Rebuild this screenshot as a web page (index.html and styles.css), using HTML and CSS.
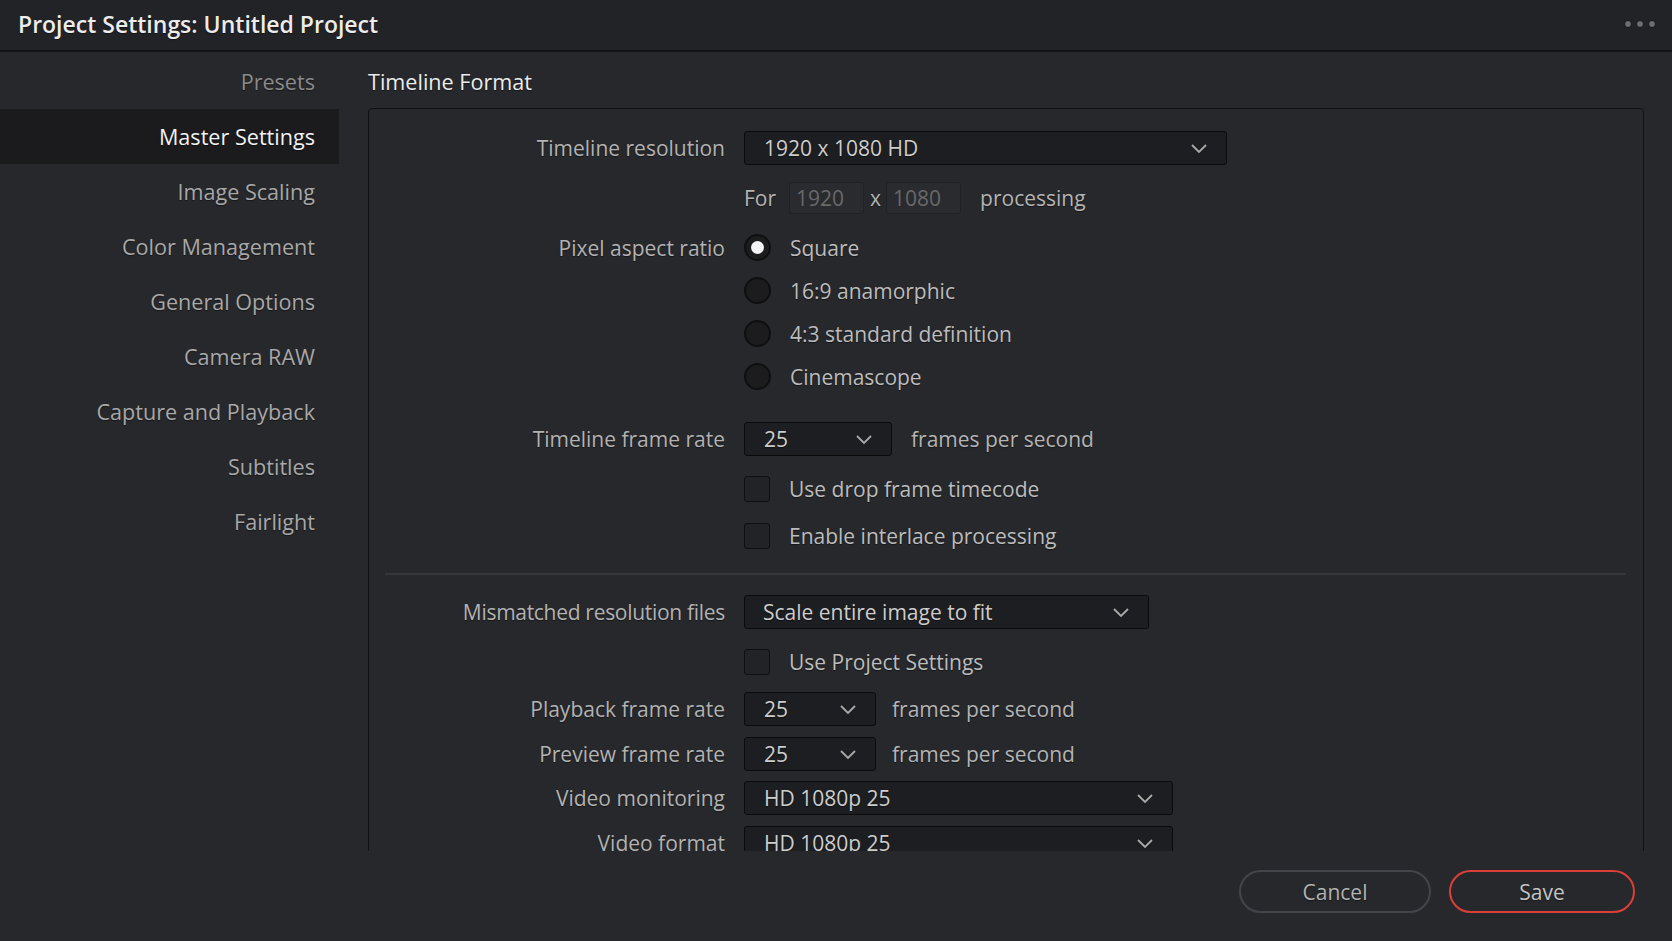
FILE: index.html
```html
<!DOCTYPE html>
<html lang="en">
<head>
  <meta charset="UTF-8">
  <title>Project Settings: Untitled Project</title>
  <link rel="stylesheet" href="styles.css">
</head>
<body>
<div class="titlebar">
  <h1 class="title">Project Settings: Untitled Project</h1>
  <div class="dots"><i></i><i></i><i></i></div>
</div>

<div class="main">
  <ul class="sidebar">
    <li class="presets">Presets</li>
    <li class="active">Master Settings</li>
    <li>Image Scaling</li>
    <li>Color Management</li>
    <li>General Options</li>
    <li>Camera RAW</li>
    <li>Capture and Playback</li>
    <li>Subtitles</li>
    <li>Fairlight</li>
  </ul>

  <div class="content">
    <h2 class="section-title">Timeline Format</h2>

    <div class="scroll">
      <div class="panel">
        <div class="row first">
          <span class="label">Timeline resolution</span>
          <div class="select w-res"><span>1920 x 1080 HD</span>
            <svg width="16" height="9" viewBox="0 0 16 9"><path d="M1 1l7 7 7-7" fill="none" stroke="#a9a9a9" stroke-width="1.8"/></svg>
          </div>
        </div>

        <div class="row">
          <span class="label"></span>
          <span class="text">For</span>
          <span class="field">1920</span>
          <span class="text times">x</span>
          <span class="field">1080</span>
          <span class="text after">processing</span>
        </div>

        <div class="row radio first-radio">
          <span class="label">Pixel aspect ratio</span>
          <span class="dot checked"></span><span class="opt">Square</span>
        </div>
        <div class="row radio">
          <span class="label"></span>
          <span class="dot"></span><span class="opt">16:9 anamorphic</span>
        </div>
        <div class="row radio">
          <span class="label"></span>
          <span class="dot"></span><span class="opt">4:3 standard definition</span>
        </div>
        <div class="row radio">
          <span class="label"></span>
          <span class="dot"></span><span class="opt">Cinemascope</span>
        </div>

        <div class="row rate">
          <span class="label">Timeline frame rate</span>
          <div class="select w-fps"><span>25</span>
            <svg width="16" height="9" viewBox="0 0 16 9"><path d="M1 1l7 7 7-7" fill="none" stroke="#a9a9a9" stroke-width="1.8"/></svg>
          </div>
          <span class="text after">frames per second</span>
        </div>

        <div class="row check first-check">
          <span class="label"></span>
          <span class="box"></span><span class="opt">Use drop frame timecode</span>
        </div>
        <div class="row check">
          <span class="label"></span>
          <span class="box"></span><span class="opt">Enable interlace processing</span>
        </div>

        <hr class="divider">

        <div class="row mismatch">
          <span class="label narrow">Mismatched resolution files</span>
          <div class="select w-fit"><span>Scale entire image to fit</span>
            <svg width="16" height="9" viewBox="0 0 16 9"><path d="M1 1l7 7 7-7" fill="none" stroke="#a9a9a9" stroke-width="1.8"/></svg>
          </div>
        </div>

        <div class="row project">
          <span class="label"></span>
          <span class="box"></span><span class="opt">Use Project Settings</span>
        </div>

        <div class="row playback">
          <span class="label">Playback frame rate</span>
          <div class="select w-small"><span>25</span>
            <svg width="16" height="9" viewBox="0 0 16 9"><path d="M1 1l7 7 7-7" fill="none" stroke="#a9a9a9" stroke-width="1.8"/></svg>
          </div>
          <span class="text after-small">frames per second</span>
        </div>

        <div class="row preview">
          <span class="label">Preview frame rate</span>
          <div class="select w-small"><span>25</span>
            <svg width="16" height="9" viewBox="0 0 16 9"><path d="M1 1l7 7 7-7" fill="none" stroke="#a9a9a9" stroke-width="1.8"/></svg>
          </div>
          <span class="text after-small">frames per second</span>
        </div>

        <div class="row monitor">
          <span class="label">Video monitoring</span>
          <div class="select w-video"><span>HD 1080p 25</span>
            <svg width="16" height="9" viewBox="0 0 16 9"><path d="M1 1l7 7 7-7" fill="none" stroke="#a9a9a9" stroke-width="1.8"/></svg>
          </div>
        </div>

        <div class="row format">
          <span class="label">Video format</span>
          <div class="select w-video"><span>HD 1080p 25</span>
            <svg width="16" height="9" viewBox="0 0 16 9"><path d="M1 1l7 7 7-7" fill="none" stroke="#a9a9a9" stroke-width="1.8"/></svg>
          </div>
        </div>
      </div>
    </div>

    <div class="footer">
      <button class="btn cancel">Cancel</button>
      <button class="btn save">Save</button>
    </div>
  </div>
</div>
</body>
</html>
```

FILE: styles.css
```css
* {
  padding: 0;
  margin: 0;
  box-sizing: border-box;
}

html,
body {
  width: 1672px;
  height: 941px;
  overflow: hidden;
}

body {
  background-color: #27282c;
  font-family: "Open Sans", "Noto Sans", sans-serif;
  color: #b4b4b4;
  text-shadow: 0 1px 1px rgba(0, 0, 0, .45);
}

/* title bar */
.titlebar {
  display: flex;
  align-items: center;
  justify-content: space-between;
  height: 52px;
  padding: 0 18px 2px 18px;
  background-color: #222327;
  border-bottom: 2px solid #121315;
}

.title {
  font-size: 23px;
  font-weight: 600;
  color: #ececec;
}

.dots {
  display: flex;
  gap: 4px;
  margin-right: -2px;
}

.dots i {
  width: 8px;
  height: 8px;
  border-radius: 50%;
  background-color: #6f6f72;
  border: 1.5px solid #141416;
}

.main {
  display: flex;
  height: 889px;
}

/* left menu */
.sidebar {
  width: 339px;
  padding-top: 2px;
  list-style: none;
}

.sidebar li {
  display: flex;
  align-items: center;
  justify-content: flex-end;
  height: 55px;
  padding-right: 24px;
  font-size: 21.6px;
  color: #a8a8a8;
}

.sidebar .presets {
  color: #8a8a8b;
}

.sidebar .active {
  background-color: #1b1b1e;
  color: #f2f2f2;
}

/* right side */
.content {
  display: flex;
  flex-direction: column;
  flex: 1;
  padding: 2px 0 0 29px;
}

.section-title {
  display: flex;
  align-items: center;
  height: 54px;
  font-size: 21.6px;
  font-weight: 400;
  color: #ececec;
}

.scroll {
  height: 743px;
  margin-right: 28px;
  overflow: hidden;
}

.panel {
  min-height: 820px;
  padding-top: 22px;
  border: 1px solid #101113;
  border-radius: 4px;
}

.row {
  display: flex;
  align-items: center;
  height: 34px;
  margin-top: 16px;
  font-size: 21px;
}

.row.first {
  margin-top: 0;
}

.label {
  flex: none;
  width: 356px;
  margin-right: 19px;
  text-align: right;
  color: #b2b2b2;
}

.label.narrow {
  letter-spacing: -0.3px;
}

.select {
  display: flex;
  align-items: center;
  justify-content: space-between;
  height: 34px;
  padding: 0 19px 0 19px;
  background-color: #1d1e21;
  border: 1px solid #0b0b0c;
  border-radius: 3px;
  color: #cdcdcd;
}

.select svg {
  flex: none;
}

.w-res { width: 483px; }
.w-fps { width: 148px; }
.w-fit { width: 405px; padding-left: 18px; }
.w-small { width: 132px; }
.w-video { width: 429px; }

.text {
  color: #b4b4b4;
}

.times {
  margin: 0 5px 0 6px;
}

.after {
  margin-left: 19px;
}

.after-small {
  margin-left: 16px;
}

.field {
  width: 75px;
  height: 32px;
  margin-left: 13px;
  padding-left: 6px;
  line-height: 30px;
  background-color: #2a2b2f;
  border: 1px solid #202124;
  border-radius: 3px;
  color: #68686a;
  text-shadow: none;
}

.field + .text + .field {
  margin-left: 0;
}

/* radio buttons */
.row.radio {
  height: 43px;
  margin-top: 0;
}

.row.first-radio {
  margin-top: 11px;
}

.dot {
  position: relative;
  width: 27px;
  height: 27px;
  border-radius: 50%;
  background-color: #1c1c1f;
  border: 2px solid #0f0f11;
}

.dot.checked::after {
  content: "";
  position: absolute;
  left: 5px;
  top: 5px;
  width: 13px;
  height: 13px;
  border-radius: 50%;
  background-color: #f4f4f4;
}

.opt {
  margin-left: 19px;
  color: #bcbcbc;
}

.row.rate {
  margin-top: 24px;
}

/* check boxes */
.row.check {
  height: 47px;
  margin-top: 0;
}

.row.first-check {
  margin-top: 9px;
}

.box {
  width: 26px;
  height: 26px;
  background-color: #222326;
  border: 1px solid #0f0f11;
  border-radius: 3px;
}

.divider {
  height: 2px;
  margin: 14px 17px 0 16px;
  background-color: #35363a;
  border: none;
}

.row.mismatch {
  margin-top: 20px;
}

.row.project {
  margin-top: 16px;
}

.row.playback {
  margin-top: 13px;
}

.row.preview {
  margin-top: 11px;
}

.row.monitor {
  margin-top: 10px;
}

.row.format {
  margin-top: 11px;
}

/* bottom buttons */
.footer {
  display: flex;
  justify-content: flex-end;
  gap: 18px;
  padding: 19px 37px 0 0;
}

.btn {
  height: 43px;
  border-radius: 22px;
  background-color: transparent;
  font-family: "Open Sans", "Noto Sans", sans-serif;
  font-size: 21px;
  text-shadow: 0 1px 1px rgba(0, 0, 0, .45);
}

.cancel {
  width: 192px;
  border: 2px solid #44454a;
  color: #b2b2b2;
}

.save {
  width: 186px;
  border: 2px solid #dc3f38;
  color: #c4c4c4;
}
```
